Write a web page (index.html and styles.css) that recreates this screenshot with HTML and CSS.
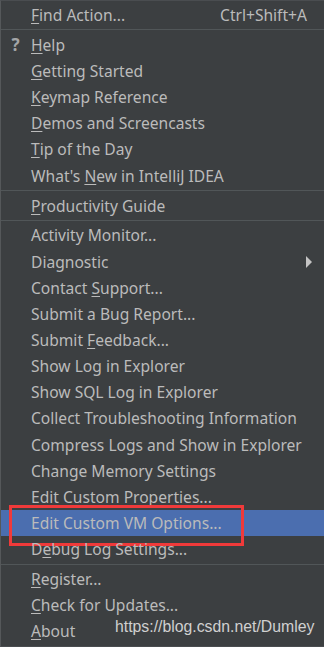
FILE: index.html
```html
<!DOCTYPE html>
<html lang="en">
<head>
  <meta charset="UTF-8">
  <meta name="viewport" content="width=device-width, initial-scale=1">
  <title>Help Menu</title>
  <link rel="stylesheet" href="styles.css">
</head>
<body>

<div class="menu">
  <div class="item first"><span class="gutter"></span><span class="label"><u>F</u>ind Action...</span><span class="shortcut">Ctrl+Shift+A</span></div>
  <div class="sep"></div>

  <div class="item"><span class="gutter help">?</span><span class="label"><u>H</u>elp</span></div>
  <div class="item"><span class="gutter"></span><span class="label"><u>G</u>etting Started</span></div>
  <div class="item"><span class="gutter"></span><span class="label"><u>K</u>eymap Reference</span></div>
  <div class="item"><span class="gutter"></span><span class="label"><u>D</u>emos and Screencasts</span></div>
  <div class="item"><span class="gutter"></span><span class="label"><u>T</u>ip of the Day</span></div>
  <div class="item"><span class="gutter"></span><span class="label">What's <u>N</u>ew in IntelliJ IDEA</span></div>
  <div class="sep"></div>

  <div class="item"><span class="gutter"></span><span class="label"><u>P</u>roductivity Guide</span></div>
  <div class="sep"></div>

  <div class="item"><span class="gutter"></span><span class="label">Activity Monitor...</span></div>
  <div class="item"><span class="gutter"></span><span class="label">Diagnostic</span><span class="arrow"></span></div>
  <div class="item"><span class="gutter"></span><span class="label">Contact <u>S</u>upport...</span></div>
  <div class="item"><span class="gutter"></span><span class="label">Submit a Bug Report...</span></div>
  <div class="item"><span class="gutter"></span><span class="label">Submit <u>F</u>eedback...</span></div>
  <div class="item"><span class="gutter"></span><span class="label">Show Log in Explorer</span></div>
  <div class="item"><span class="gutter"></span><span class="label">Show SQL Log in Explorer</span></div>
  <div class="item"><span class="gutter"></span><span class="label">Collect Troubleshooting Information</span></div>
  <div class="item"><span class="gutter"></span><span class="label">Compress Logs and Show in Explorer</span></div>
  <div class="item"><span class="gutter"></span><span class="label">Change Memory Settings</span></div>
  <div class="item"><span class="gutter"></span><span class="label">Edit Custom Properties...</span></div>
  <div class="item selected"><span class="gutter"></span><span class="label">Edit Custom VM Options...</span></div>
  <div class="item"><span class="gutter"></span><span class="label">D<u>e</u>bug Log Settings...</span></div>
  <div class="sep"></div>

  <div class="item"><span class="gutter"></span><span class="label"><u>R</u>egister...</span></div>
  <div class="item"><span class="gutter"></span><span class="label"><u>C</u>heck for Updates...</span></div>
  <div class="item"><span class="gutter"></span><span class="label"><u>A</u>bout</span></div>

  <div class="watermark">https://blog.csdn.net/Dumley</div>
</div>

</body>
</html>
```

FILE: styles.css
```css
* { margin: 0; padding: 0; box-sizing: border-box; }
body {
  background: #3c3f41;
  font-family: 'Noto Sans', sans-serif;
  color: #bbbbbb;
}
.menu {
  position: relative;
  width: 324px;
  height: 647px;
  background: #3c3f41;
  border-left: 1px solid #55585a;
  border-top: 1px solid #4a4d50;
  border-bottom: 1px solid #4a4d50;
  padding-top: 1px;
}
.item {
  position: relative;
  display: flex;
  align-items: center;
  height: 26.15px;
  padding-right: 17px;
  font-size: 15.6px;
  white-space: nowrap;
}
.item.first {
  height: 26px;
}
.gutter {
  width: 30px;
  flex: none;
  text-align: center;
}
.help {
  font-weight: bold;
  font-size: 17px;
  color: #a4a6a8;
  padding-right: 1px;
}
.label {
  flex: 1;
}
u {
  text-decoration: underline;
  text-decoration-thickness: 1px;
  text-underline-offset: 2px;
}
.shortcut {
  flex: none;
}
.arrow {
  width: 0;
  height: 0;
  border-top: 6px solid transparent;
  border-bottom: 6px solid transparent;
  border-left: 6px solid #c4c4c4;
  margin-right: -5px;
}
.sep {
  height: 3.8px;
  padding: 1.4px 0;
}
.sep::before {
  content: "";
  display: block;
  height: 1px;
  background: #515658;
}
.selected {
  background: #4b6eaf;
}
.selected::after {
  content: "";
  position: absolute;
  left: 8px;
  top: -5px;
  width: 229px;
  height: 35px;
  border: 3px solid #f03a3a;
}
.watermark {
  position: absolute;
  left: 114px;
  top: 617px;
  font-family: 'Liberation Sans', Arial, sans-serif;
  font-size: 15.8px;
  color: #d0d0d0;
}
```
